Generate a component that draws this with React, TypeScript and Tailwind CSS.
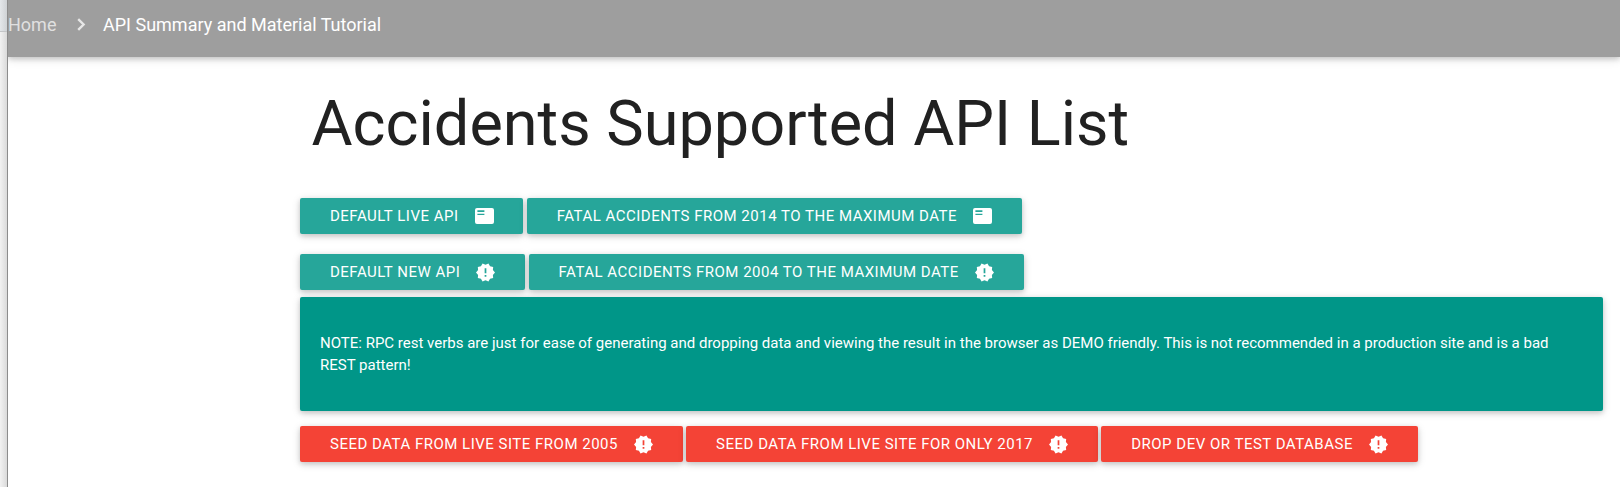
import React from "react";

type IconName = "list" | "alert";

function ListIcon() {
  return (
    <svg className="h-4 w-[19px] shrink-0" viewBox="0 0 19 16" fill="currentColor">
      <path
        fillRule="evenodd"
        d="M2 0H17Q19 0 19 2V14Q19 16 17 16H2Q0 16 0 14V2Q0 0 2 0ZM2.4 2.3V4H9.4V2.3ZM2.4 5.7V7.1H9.4V5.7Z"
      />
    </svg>
  );
}

function AlertIcon() {
  return (
    <svg className="h-[19px] w-[19px] shrink-0" viewBox="1 1 22 22" fill="currentColor">
      <path d="M23 12l-2.44-2.78.34-3.68-3.61-.82-1.89-3.18L12 3 8.6 1.54 6.71 4.72l-3.61.81.34 3.68L1 12l2.44 2.78-.34 3.69 3.61.82 1.89 3.18L12 21l3.4 1.46 1.89-3.18 3.61-.82-.34-3.68L23 12zm-10 5h-2v-2h2v2zm0-4h-2V7h2v6z" />
    </svg>
  );
}

const shadow = "shadow-[0_2px_5px_0_rgba(0,0,0,0.16),0_2px_10px_0_rgba(0,0,0,0.12)]";

function ActionButton({ label, icon, tone }: { label: string; icon: IconName; tone: "teal" | "red" }) {
  return (
    <button
      className={`flex h-9 items-center rounded-xs pr-[29.7px] pl-[30px] text-[15px] tracking-[0.5px] whitespace-nowrap text-white uppercase ${shadow} ${
        tone === "teal" ? "bg-[#26a69a]" : "bg-[#f44336]"
      }`}
    >
      <span className="mr-4">{label}</span>
      {icon === "list" ? <ListIcon /> : <AlertIcon />}
    </button>
  );
}

export default function App() {
  return (
    <div className="flex h-[487px] w-full overflow-hidden bg-white font-['Roboto',sans-serif] text-[#212121]">
      <aside className="flex w-2 shrink-0 flex-col border-r border-[#8c8c8c]">
        <div className="h-8 border-b border-[#c4c6c8] bg-linear-to-r from-[#e4e7ea] to-[#cfd2d5]" />
        <div className="flex-1 bg-linear-to-r from-[#f2f2f2] to-[#dadada]" />
      </aside>
      <div className="flex min-w-0 flex-1 flex-col overflow-hidden">
        <nav className={`flex h-[57px] shrink-0 items-start bg-[#9e9e9e] text-[18px] leading-[49px] text-white ${shadow}`}>
          <span className="w-12 text-white/70">Home</span>
          <svg className="mt-[18px] ml-[20.5px] h-[13px] w-[9px]" viewBox="0 0 9 13" fill="none" stroke="#fff" strokeOpacity="0.75" strokeWidth="2.4">
            <path d="M1.2 1.2L6.6 6.5L1.2 11.8" />
          </svg>
          <span className="ml-[17.5px]">API Summary and Material Tutorial</span>
        </nav>
        <main className="flex flex-col pr-[17px] pl-[292px]">
          <h1 className="mt-8 ml-[11.5px] text-[63px] leading-[69px]">Accidents Supported API List</h1>
          <div className="mt-10 flex gap-[3.5px]">
            <ActionButton label="Default Live API" icon="list" tone="teal" />
            <ActionButton label="Fatal accidents from 2014 to the maximum date" icon="list" tone="teal" />
          </div>
          <div className="mt-5 flex gap-[3.5px]">
            <ActionButton label="Default New API" icon="alert" tone="teal" />
            <ActionButton label="Fatal accidents from 2004 to the maximum date" icon="alert" tone="teal" />
          </div>
          <section className={`mt-[7px] h-[114px] rounded-xs bg-[#009688] px-5 pt-[35px] text-[15px] leading-[22px] text-white ${shadow}`}>
            <p>
              NOTE: RPC rest verbs are just for ease of generating and dropping data and viewing the result in the browser as DEMO friendly.
              This is not recommended in a production site and is a bad REST pattern!
            </p>
          </section>
          <div className="mt-[15px] flex gap-[3.5px]">
            <ActionButton label="Seed data from live site from 2005" icon="alert" tone="red" />
            <ActionButton label="Seed data from live site for only 2017" icon="alert" tone="red" />
            <ActionButton label="Drop dev or test database" icon="alert" tone="red" />
          </div>
        </main>
      </div>
    </div>
  );
}
